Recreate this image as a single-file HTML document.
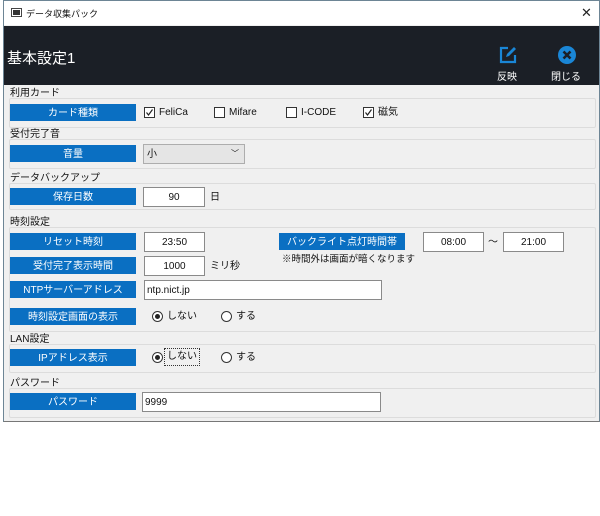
<!DOCTYPE html>
<html><head><meta charset="utf-8"><style>
*{box-sizing:border-box;margin:0;padding:0}
body{width:600px;height:516px;background:#fff;position:relative;overflow:hidden;font-family:"Liberation Sans","Noto Sans CJK JP",sans-serif;font-size:10px;color:#111}
.a{position:absolute}
#win{left:3px;top:0;width:597px;height:422px;border:1px solid #6d8595;border-bottom:1px solid #777;background:#f0f0f0}
.lbl{position:absolute;left:6px;width:126px;height:17px;background:#0a6fc2;color:#fff;text-align:center;padding-top:4px;line-height:11px;font-size:10px}
.box{position:absolute;left:5px;width:587px;border:1px solid #dcdcdc;border-radius:2px}
.gt{position:absolute;left:6px;font-size:10px;line-height:12px;color:#111}
.in{position:absolute;height:20px;background:#fff;border:1px solid #8a8a8a;font-size:10px;padding-top:4px;line-height:12px}
.cb{position:absolute;width:11px;height:11px;border:1px solid #333;background:#fff}
.rd{position:absolute;width:11px;height:11px;border:1px solid #333;border-radius:50%;background:#fff}
.rd.on::after{content:"";position:absolute;left:2px;top:2px;width:5px;height:5px;border-radius:50%;background:#222}
.t{position:absolute;font-size:10px;line-height:12px}
</style></head><body>
<div id="win" class="a">
 <div class="a" style="left:0;top:0;width:595px;height:24px;background:#fff"></div>
 <div class="a" style="left:7px;top:7px;width:11px;height:9px;border:1px solid #444;background:#fff"><div style="margin:1px;height:5px;background:#333"></div></div>
 <div class="t" style="left:22px;top:7px;font-size:9px">データ収集パック</div>
 <div class="t" style="left:577px;top:6px;font-size:13px;color:#222">✕</div>
 <div class="a" style="left:0;top:25px;width:595px;height:59px;background:#1b1f26"></div>
 <div class="t" style="left:3px;top:50px;font-size:15px;line-height:16px;color:#fff">基本設定1</div>
 <svg class="a" style="left:494px;top:44px" width="20" height="20" viewBox="0 0 20 20"><path d="M10 3H3v14h14v-7" fill="none" stroke="#1a86d6" stroke-width="2.2"/><path d="M8 12l1-3 7-7 2 2-7 7z" fill="#1a86d6"/></svg>
 <div class="t" style="left:493px;top:71px;color:#fff">反映</div>
 <svg class="a" style="left:553px;top:44px" width="20" height="20" viewBox="0 0 20 20"><circle cx="10" cy="10" r="9" fill="#1a86d6"/><path d="M6.5 6.5l7 7M13.5 6.5l-7 7" stroke="#1b1f26" stroke-width="2.6"/></svg>
 <div class="t" style="left:547px;top:71px;color:#fff">閉じる</div>

 <div class="gt" style="top:87px">利用カード</div>
 <div class="box" style="top:97px;height:30px"></div>
 <div class="lbl" style="top:103px">カード種類</div>
 <div class="cb" style="left:140px;top:106px"><svg width="9" height="9" style="position:absolute;left:0;top:0"><path d="M1.5 4.5l2 2.5 4-5.5" fill="none" stroke="#222" stroke-width="1.2"/></svg></div><div class="t" style="left:155px;top:106px">FeliCa</div>
 <div class="cb" style="left:210px;top:106px"></div><div class="t" style="left:225px;top:106px">Mifare</div>
 <div class="cb" style="left:282px;top:106px"></div><div class="t" style="left:297px;top:106px">I-CODE</div>
 <div class="cb" style="left:359px;top:106px"><svg width="9" height="9" style="position:absolute;left:0;top:0"><path d="M1.5 4.5l2 2.5 4-5.5" fill="none" stroke="#222" stroke-width="1.2"/></svg></div><div class="t" style="left:374px;top:106px">磁気</div>

 <div class="gt" style="top:128px">受付完了音</div>
 <div class="box" style="top:138px;height:30px"></div>
 <div class="lbl" style="top:144px">音量</div>
 <div class="in" style="left:139px;top:143px;width:102px;background:#e5e5e5;border-color:#adadad;padding-left:3px">小<span style="position:absolute;right:5px;top:3px;font-size:8px">﹀</span></div>

 <div class="gt" style="top:172px">データバックアップ</div>
 <div class="box" style="top:182px;height:27px"></div>
 <div class="lbl" style="top:187px">保存日数</div>
 <div class="in" style="left:139px;top:186px;width:62px;text-align:center">90</div>
 <div class="t" style="left:206px;top:191px">日</div>

 <div class="gt" style="top:216px">時刻設定</div>
 <div class="box" style="top:226px;height:105px"></div>
 <div class="lbl" style="top:232px">リセット時刻</div>
 <div class="in" style="left:140px;top:231px;width:61px;text-align:center">23:50</div>
 <div class="lbl" style="left:275px;top:232px">バックライト点灯時間帯</div>
 <div class="in" style="left:419px;top:231px;width:61px;text-align:center">08:00</div>
 <div class="t" style="left:484px;top:236px">～</div>
 <div class="in" style="left:499px;top:231px;width:61px;text-align:center">21:00</div>
 <div class="t" style="left:278px;top:253px;font-size:9.5px">※時間外は画面が暗くなります</div>
 <div class="lbl" style="top:256px">受付完了表示時間</div>
 <div class="in" style="left:140px;top:255px;width:61px;text-align:center">1000</div>
 <div class="t" style="left:206px;top:260px">ミリ秒</div>
 <div class="lbl" style="top:280px">NTPサーバーアドレス</div>
 <div class="in" style="left:140px;top:279px;width:238px;padding-left:2px">ntp.nict.jp</div>
 <div class="lbl" style="top:307px">時刻設定画面の表示</div>
 <div class="rd on" style="left:148px;top:310px"></div><div class="t" style="left:163px;top:310px">しない</div>
 <div class="rd" style="left:217px;top:310px"></div><div class="t" style="left:232px;top:310px">する</div>

 <div class="gt" style="top:333px">LAN設定</div>
 <div class="box" style="top:343px;height:29px"></div>
 <div class="lbl" style="top:348px">IPアドレス表示</div>
 <div class="rd on" style="left:148px;top:351px"></div><div class="t" style="left:160px;top:347px;border:1px dotted #333;padding:2px 2px;line-height:12px">しない</div>
 <div class="rd" style="left:217px;top:351px"></div><div class="t" style="left:232px;top:351px">する</div>

 <div class="gt" style="top:377px">パスワード</div>
 <div class="box" style="top:387px;height:30px"></div>
 <div class="lbl" style="top:392px">パスワード</div>
 <div class="in" style="left:138px;top:391px;width:239px;padding-left:2px">9999</div>
</div>
</body></html>
